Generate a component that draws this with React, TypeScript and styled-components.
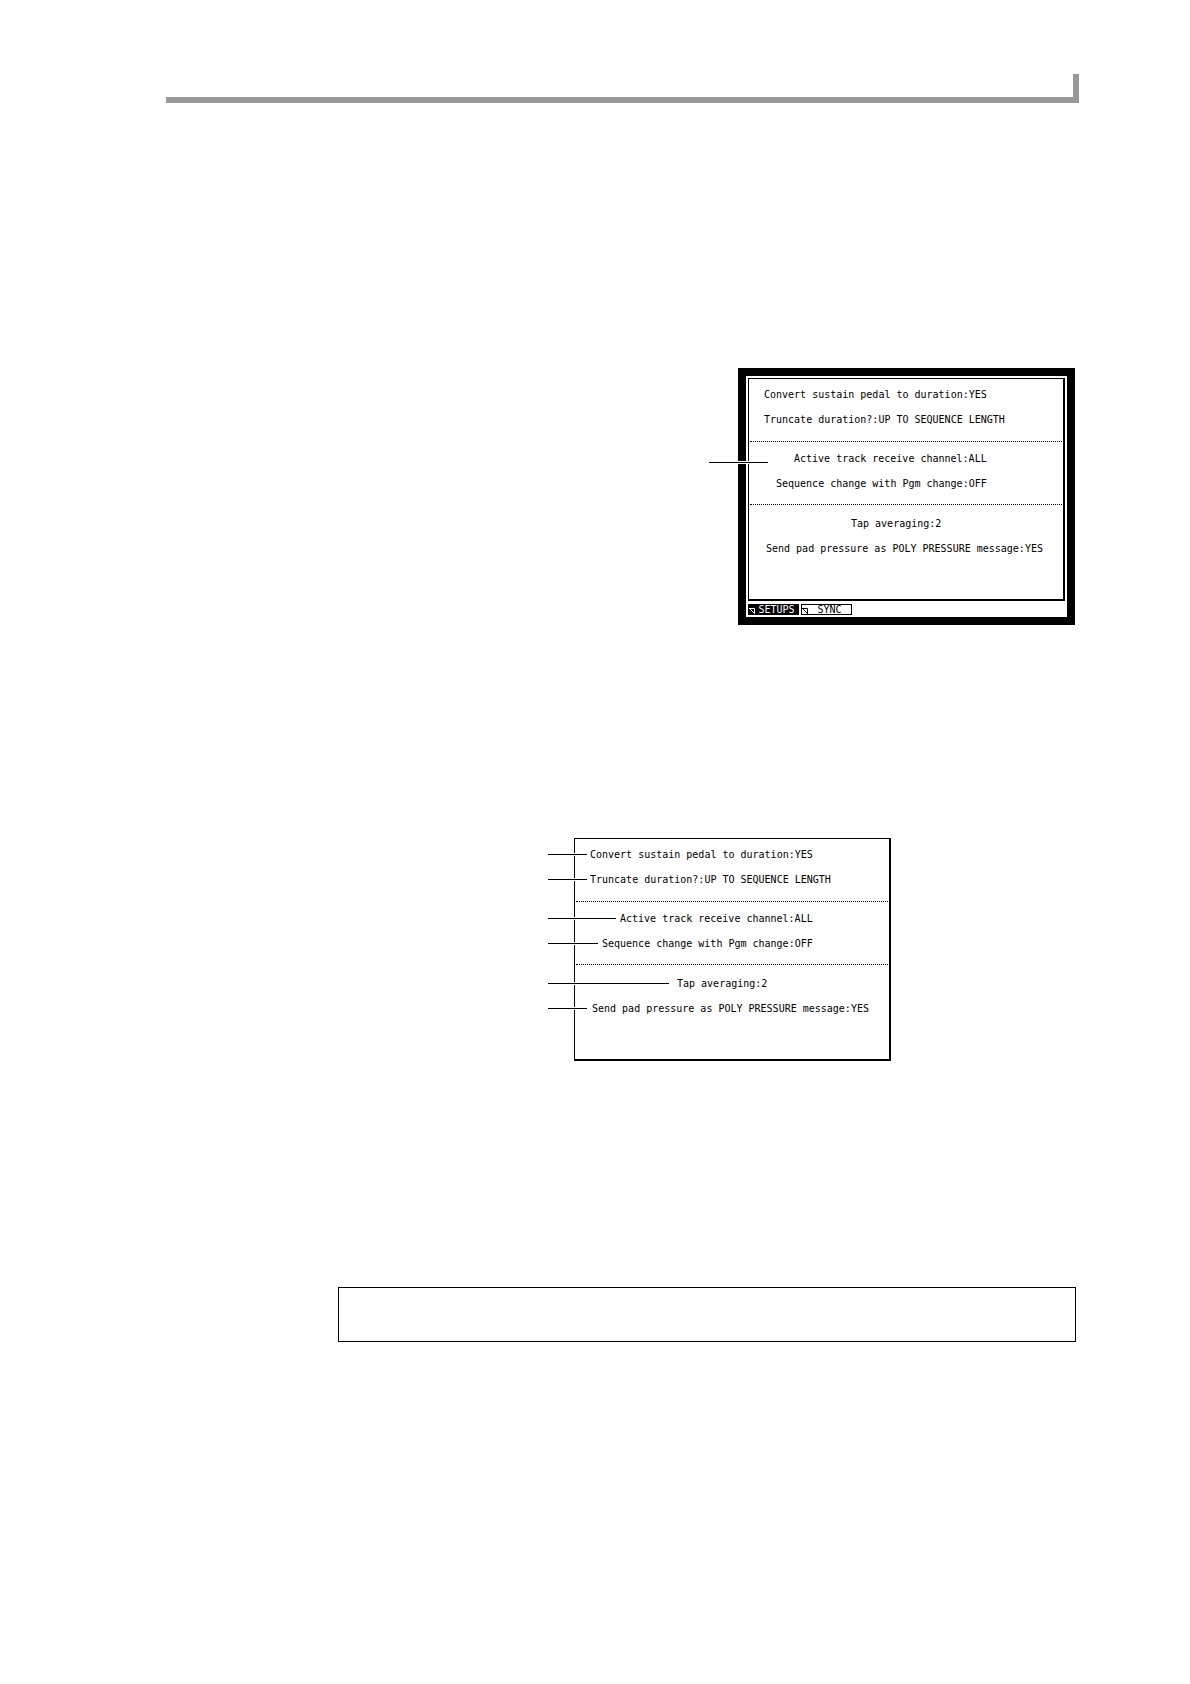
import React, { useId } from "react";
import styled, { createGlobalStyle, css } from "styled-components";

const GlobalStyle = createGlobalStyle`
  * { box-sizing: border-box; }
  body {
    margin: 0;
    background: #fff;
    color: #000;
    font-family: "DejaVu Sans Mono", "Liberation Mono", monospace;
    font-size: 10px;
    line-height: 11px;
  }
`;

const Page = styled.div`
  display: flex;
  flex-direction: column;
  padding: 74px 111px 96px 166px;
`;

const HeaderRule = styled.header`
  height: 29px;
  border: solid #999;
  border-width: 0 6px 6px 0;
`;

const Main = styled.main`
  display: flex;
  flex-direction: column;
  padding-right: 3px;
`;

const ScreenFigure = styled.figure`
  position: relative;
  align-self: flex-end;
  width: 337px;
  margin: 265px 1px 0 0;
  padding: 2px;
  border: 8px solid #000;
`;

const DetailFigure = styled.figure`
  align-self: flex-end;
  width: 317px;
  margin: 213px 185px 0 0;
`;

const Panel = styled.form`
  width: 317px;
  height: 223px;
  border: solid #000;
  border-width: 1px 2px 2px 1px;
`;

const Group = styled.div`
  margin: 0 1px;
  padding: 4px 0 8px 14px;

  &:first-child {
    padding: 3px 0 9px 14px;
  }

  &:last-child {
    padding-top: 6px;
  }

  & + & {
    border-top: 1px dotted #000;
  }
`;

const Row = styled.div<{ $indent: number }>`
  position: relative;
  display: flex;
  align-items: center;
  height: 25px;
  padding-left: ${(p) => p.$indent}px;
  white-space: pre;
`;

const control = css`
  appearance: none;
  margin: 0;
  padding: 0;
  border: 0;
  border-radius: 0;
  background: none;
  color: inherit;
  font: inherit;
`;

const Choice = styled.select`
  ${control}
  field-sizing: content;
`;

const NumberBox = styled.input`
  ${control}
  width: 12px;
`;

const Leader = styled.span<{ $length: number }>`
  position: absolute;
  left: -42px;
  top: 11px;
  width: ${(p) => p.$length}px;
  height: 3px;
  border: solid #fff;
  border-width: 1px 0;
  background: #000;
`;

const ScreenLeader = styled(Leader)`
  left: -37px;
  top: 85px;
`;

const Tabs = styled.nav`
  display: flex;
  gap: 2px;
  margin: 3px 0 0;
`;

const Tab = styled.button<{ $active?: boolean }>`
  ${control}
  display: flex;
  align-items: center;
  width: 51px;
  height: 11px;
  border: 1px solid #000;
  background: ${(p) => (p.$active ? "#000" : "#fff")};
  color: ${(p) => (p.$active ? "#fff" : "#000")};
  line-height: 9px;
`;

const TabLabel = styled.span`
  flex: 1;
  text-align: center;
`;

const Note = styled.aside`
  height: 55px;
  margin: 226px 0 0 172px;
  border: 1px solid #000;
`;

type Setting = {
  label: string;
  value: string;
  indent: number;
  leader: number;
  numeric?: boolean;
};

const groups: Setting[][] = [
  [
    { label: "Convert sustain pedal to duration:", value: "YES", indent: 0, leader: 39 },
    { label: "Truncate duration?:", value: "UP TO SEQUENCE LENGTH", indent: 0, leader: 39 },
  ],
  [
    { label: "Active track receive channel:", value: "ALL", indent: 30, leader: 68 },
    { label: "Sequence change with Pgm change:", value: "OFF", indent: 12, leader: 50 },
  ],
  [
    { label: "Tap averaging:", value: "2", indent: 87, leader: 121, numeric: true },
    { label: "Send pad pressure as POLY PRESSURE message:", value: "YES", indent: 2, leader: 39 },
  ],
];

function SettingRow({ setting, pointed }: { setting: Setting; pointed?: boolean }) {
  const id = useId();
  return (
    <Row $indent={setting.indent}>
      {pointed && <Leader $length={setting.leader} />}
      <label htmlFor={id}>{setting.label}</label>
      {setting.numeric ? (
        <NumberBox id={id} defaultValue={setting.value} />
      ) : (
        <Choice id={id} defaultValue={setting.value}>
          <option>{setting.value}</option>
        </Choice>
      )}
    </Row>
  );
}

function SetupPanel({ pointed }: { pointed?: boolean }) {
  return (
    <Panel>
      {groups.map((rows, i) => (
        <Group key={i}>
          {rows.map((s) => (
            <SettingRow key={s.label} setting={s} pointed={pointed} />
          ))}
        </Group>
      ))}
    </Panel>
  );
}

function CornerMark() {
  return (
    <svg width="6" height="9" viewBox="0 0 6 9" fill="none" stroke="currentColor" aria-hidden="true">
      <path d="M0 3.5H5.5V9M0.5 3.5L5.5 8.5" />
    </svg>
  );
}

export default function App() {
  return (
    <>
      <GlobalStyle />
      <Page>
        <HeaderRule />
        <Main>
          <ScreenFigure>
            <SetupPanel />
            <Tabs>
              <Tab type="button" $active>
                <CornerMark />
                <TabLabel>SETUPS</TabLabel>
              </Tab>
              <Tab type="button">
                <CornerMark />
                <TabLabel>SYNC</TabLabel>
              </Tab>
            </Tabs>
            <ScreenLeader $length={59} />
          </ScreenFigure>
          <DetailFigure>
            <SetupPanel pointed />
          </DetailFigure>
          <Note />
        </Main>
      </Page>
    </>
  );
}
